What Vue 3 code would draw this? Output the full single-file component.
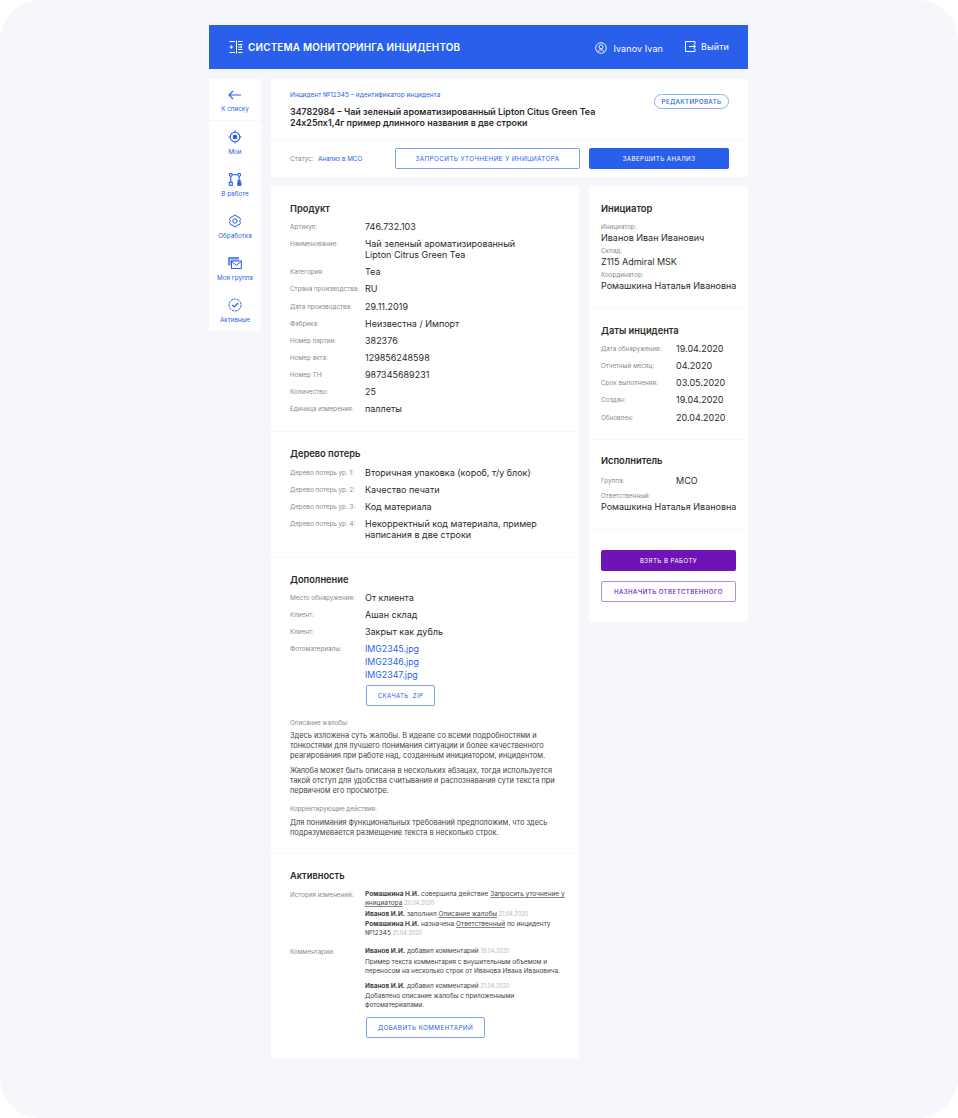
<script setup>
const product = [
  ['Артикул:', ['746.732.103']],
  ['Наименование:', ['Чай зеленый ароматизированный', 'Lipton Citrus Green Tea']],
  ['Категория:', ['Tea']],
  ['Страна производства:', ['RU']],
  ['Дата производства:', ['29.11.2019']],
  ['Фабрика:', ['Неизвестна / Импорт']],
  ['Номер партии:', ['382376']],
  ['Номер акта:', ['129856248598']],
  ['Номер ТН:', ['987345689231']],
  ['Количество:', ['25']],
  ['Единица измерения:', ['паллеты']]
]

const lossTree = [
  ['Дерево потерь ур. 1:', ['Вторичная упаковка (короб, т/у блок)']],
  ['Дерево потерь ур. 2:', ['Качество печати']],
  ['Дерево потерь ур. 3:', ['Код материала']],
  ['Дерево потерь ур. 4:', ['Некорректный код материала, пример', 'написания в две строки']]
]

const extra = [
  ['Место обнаружения:', ['От клиента']],
  ['Клиент:', ['Ашан склад']],
  ['Клиент:', ['Закрыт как дубль']]
]

const photos = ['IMG2345.jpg', 'IMG2346.jpg', 'IMG2347.jpg']

const dates = [
  ['Дата обнаружения:', '19.04.2020'],
  ['Отчетный месяц:', '04.2020'],
  ['Срок выполнения:', '03.05.2020'],
  ['Создан:', '19.04.2020'],
  ['Обновлен:', '20.04.2020']
]

const initiator = [
  ['Инициатор:', 'Иванов Иван Иванович'],
  ['Склад:', 'Z115 Admiral MSK'],
  ['Координатор:', 'Ромашкина Наталья Ивановна']
]
</script>

<template>
  <div class="page">
    <header class="topbar">
      <div class="brand">
        <svg class="brand-icon" viewBox="0 0 14 14" fill="none" stroke="#fff" stroke-width="1">
          <path d="M0.5 1.5h5.500M7.500 .5v13M9 1.500h4.500M0.500 7h3.500M2.250 5.250v3.500M0.500 12.500h5.500M9 4.500h4.500M9 7h4M11.500 5.700l1.500 1.300-1.500 1.300M9 9.500h4.500M9 12.500h4.500" />
        </svg>
        <span>СИСТЕМА МОНИТОРИНГА ИНЦИДЕНТОВ</span>
      </div>
      <div class="user">
        <svg class="user-icon" viewBox="0 0 12 12" fill="none" stroke="#fff" stroke-width="0.9">
          <circle cx="6" cy="6" r="5.300" />
          <circle cx="6" cy="4.800" r="2" />
          <path d="M2.800 9.800c.6-1.400 1.800-2 3.200-2s2.600.6 3.200 2" />
        </svg>
        <span>Ivanov Ivan</span>
      </div>
      <div class="logout">
        <svg class="logout-icon" viewBox="0 0 11 11" fill="none" stroke="#fff" stroke-width="1">
          <path d="M10 7.500v3H.5V.5H10v3M4 5.500h6.500M8.300 3.500l2.200 2-2.200 2" />
        </svg>
        <span>Выйти</span>
      </div>
    </header>

    <div class="body">
      <nav class="side">
        <a class="side-back">
          <svg viewBox="0 0 14 10" width="14" height="10" fill="none" stroke="#2a5fec" stroke-width="1.100">
            <path d="M13 5H1M5 1L1 5l4 4" />
          </svg>
          <span>К списку</span>
        </a>
        <a class="side-item">
          <svg viewBox="0 0 14 14" fill="none" stroke="#2a5fec" stroke-width="1.100">
            <circle cx="7" cy="7" r="4.800" />
            <circle cx="7" cy="7" r="1.800" fill="#2a5fec" />
            <path d="M7 .5v2M7 11.500v2M.5 7h2M11.500 7h2" />
          </svg>
          <span>Мои</span>
        </a>
        <a class="side-item">
          <svg viewBox="0 0 14 14" fill="none" stroke="#2a5fec" stroke-width="1.100">
            <circle cx="2.800" cy="2.800" r="1.400" />
            <circle cx="11.200" cy="2.800" r="1.400" />
            <rect x="1.300" y="10.300" width="3" height="3" />
            <rect x="9.800" y="10.300" width="3" height="3" fill="#2a5fec" />
            <path d="M2.800 4.200v6.100M4.200 2.800h5.600M11.200 4.200v6.100M9.700 8.200l1.500 2 1.500-2" />
          </svg>
          <span>В работе</span>
        </a>
        <a class="side-item">
          <svg viewBox="0 0 14 14" fill="none" stroke="#2a5fec" stroke-width="1">
            <circle cx="7" cy="7" r="2.200" />
            <path d="M9.300 3.020A2.350 2.350 0 0 1 11.600 7A2.350 2.350 0 0 1 9.300 10.980A2.350 2.350 0 0 1 4.700 10.980A2.350 2.350 0 0 1 2.400 7A2.350 2.350 0 0 1 4.700 3.020A2.350 2.350 0 0 1 9.300 3.020Z" />
          </svg>
          <span>Обработка</span>
        </a>
        <a class="side-item">
          <svg viewBox="0 0 14 14" fill="none" stroke="#2a5fec" stroke-width="1">
            <path d="M1 9.500V2h10" stroke-width="1.400" />
            <path d="M3 9.500V4h8" stroke-width="0.800" />
            <rect x="3.500" y="5" width="9.800" height="7.500" fill="#fff" />
            <path d="M3.500 5.500l4.900 3.800 4.900-3.800" />
          </svg>
          <span>Моя группа</span>
        </a>
        <a class="side-item">
          <svg viewBox="0 0 14 14" fill="none" stroke="#2a5fec" stroke-width="1">
            <circle cx="7" cy="7" r="6" stroke-dasharray="2.600 .7" />
            <path d="M4.300 7l2 2 3.700-4" stroke-width="1.200" />
          </svg>
          <span>Активные</span>
        </a>
      </nav>

      <div class="content">
        <section class="head-card">
          <div class="head-top">
            <div class="head-text">
              <div class="incident-id">Инцидент №12345 – идентификатор инцидента</div>
              <h1>34782984 – Чай зеленый ароматизированный Lipton Citus Green Tea<br>24х25пх1,4г пример длинного названия в две строки</h1>
            </div>
            <button class="pill" type="button">РЕДАКТИРОВАТЬ</button>
          </div>
          <div class="head-bottom">
            <span class="status-label">Статус:</span>
            <span class="status-value">Анализ в МСО</span>
            <button class="btn btn-outline btn-request" type="button">ЗАПРОСИТЬ УТОЧНЕНИЕ У ИНИЦИАТОРА</button>
            <button class="btn btn-primary btn-finish" type="button">ЗАВЕРШИТЬ АНАЛИЗ</button>
          </div>
        </section>

        <div class="columns">
          <main class="main-card">
            <section class="block block-product">
              <h2>Продукт</h2>
              <div v-for="row in product" :key="row[0]" class="row">
                <div class="label">{{ row[0] }}</div>
                <div class="value">
                  <div v-for="line in row[1]" :key="line">{{ line }}</div>
                </div>
              </div>
            </section>

            <section class="block block-tree">
              <h2>Дерево потерь</h2>
              <div v-for="row in lossTree" :key="row[0]" class="row">
                <div class="label">{{ row[0] }}</div>
                <div class="value">
                  <div v-for="line in row[1]" :key="line">{{ line }}</div>
                </div>
              </div>
            </section>

            <section class="block block-extra">
              <h2>Дополнение</h2>
              <div v-for="(row, i) in extra" :key="i" class="row">
                <div class="label">{{ row[0] }}</div>
                <div class="value">
                  <div v-for="line in row[1]" :key="line">{{ line }}</div>
                </div>
              </div>
              <div class="row row-photos">
                <div class="label">Фотоматериалы:</div>
                <div class="value">
                  <a v-for="p in photos" :key="p" class="photo">{{ p }}</a>
                  <button class="btn btn-outline btn-zip" type="button">СКАЧАТЬ .ZIP</button>
                </div>
              </div>
              <div class="label text-label">Описание жалобы:</div>
              <p class="text">Здесь изложена суть жалобы. В идеале со всеми подробностями и<br>тонкостями для лучшего понимания ситуации и более качественного<br>реагирования при работе над, созданным инициатором, инцидентом.</p>
              <p class="text text-next">Жалоба может быть описана в нескольких абзацах, тогда используется<br>такой отступ для удобства считывания и распознавания сути текста при<br>первичном его просмотре.</p>
              <div class="label text-label text-label-2">Корректирующие действия:</div>
              <p class="text text-last">Для понимания функциональных требований предположим, что здесь<br>подразумевается размещение текста в несколько строк.</p>
            </section>

            <section class="block block-activity">
              <h2>Активность</h2>
              <div class="activity-row">
                <div class="label">История изменений:</div>
                <div class="activity-body">
                  <p class="log"><b>Ромашкина Н.И.</b> совершила действие <u>Запросить уточнение у<br>инициатора</u> <small>20.04.2020</small></p>
                  <p class="log"><b>Иванов И.И.</b> заполнил <u>Описание жалобы</u> <small>21.04.2020</small></p>
                  <p class="log"><b>Ромашкина Н.И.</b> назначена <u>Ответственный</u> по инциденту<br>№12345 <small>21.04.2020</small></p>
                </div>
              </div>
              <div class="activity-row activity-comments">
                <div class="label">Комментарии:</div>
                <div class="activity-body">
                  <p class="log"><b>Иванов И.И.</b> добавил комментарий <small>19.04.2020</small></p>
                  <p class="comment">Пример текста комментария с внушительным объемом и<br>переносом на несколько строк от Иванова Ивана Ивановича.</p>
                  <p class="log log-next"><b>Иванов И.И.</b> добавил комментарий <small>21.04.2020</small></p>
                  <p class="comment comment-next">Добавлено описание жалобы с приложенными<br>фотоматериалами.</p>
                  <button class="btn btn-outline btn-comment" type="button">ДОБАВИТЬ КОММЕНТАРИЙ</button>
                </div>
              </div>
            </section>
          </main>

          <aside class="right-card">
            <section class="rblock rblock-init">
              <h2>Инициатор</h2>
              <div v-for="row in initiator" :key="row[0]" class="stack">
                <div class="label">{{ row[0] }}</div>
                <div class="value">{{ row[1] }}</div>
              </div>
            </section>
            <section class="rblock rblock-dates">
              <h2>Даты инцидента</h2>
              <div v-for="row in dates" :key="row[0]" class="row row-right">
                <div class="label">{{ row[0] }}</div>
                <div class="value">{{ row[1] }}</div>
              </div>
            </section>
            <section class="rblock rblock-exec">
              <h2>Исполнитель</h2>
              <div class="row row-right">
                <div class="label">Группа:</div>
                <div class="value">МСО</div>
              </div>
              <div class="stack stack-exec">
                <div class="label">Ответственный:</div>
                <div class="value">Ромашкина Наталья Ивановна</div>
              </div>
            </section>
            <section class="actions">
              <button class="btn btn-purple" type="button">ВЗЯТЬ В РАБОТУ</button>
              <button class="btn btn-purple-outline" type="button">НАЗНАЧИТЬ ОТВЕТСТВЕННОГО</button>
            </section>
          </aside>
        </div>
      </div>
    </div>
  </div>
</template>

<style scoped>
.page {
  width: 958px;
  height: 1118px;
  box-sizing: border-box;
  padding: 25px 210px 0 209px;
  background: #f5f7fc;
  border-radius: 40px;
  font-family: Inter, "Noto Sans", sans-serif;
  color: #2b2b2b;
  overflow: hidden;
}

.topbar {
  height: 44px;
  background: #2a5fec;
  color: #fff;
  display: flex;
  align-items: center;
  padding: 0 19px 0 20px;
}

.brand {
  display: flex;
  align-items: center;
  gap: 5px;
  flex: 1;
  font-size: 9.900px;
  font-weight: 600;
  letter-spacing: 0.2px;
}

.brand-icon {
  width: 14px;
  height: 14px;
}

.user {
  display: flex;
  align-items: center;
  gap: 6px;
  font-size: 9px;
  margin-right: 22px;
  letter-spacing: 0.1px;
  padding-top: 2px;
}

.user-icon {
  width: 12px;
  height: 12px;
}

.logout {
  display: flex;
  align-items: center;
  gap: 5px;
  font-size: 9px;
  letter-spacing: 0.1px;
  margin-bottom: 2px;
}

.logout-icon {
  width: 11px;
  height: 11px;
}

.body {
  display: flex;
  gap: 10px;
  margin-top: 10px;
}

.side {
  width: 52px;
  height: 252px;
  background: #fff;
  display: flex;
  flex-direction: column;
  align-items: center;
  flex: none;
}

.side a {
  display: flex;
  flex-direction: column;
  align-items: center;
  color: #2a5fec;
  font-size: 6.300px;
  width: 100%;
}

.side-back {
  height: 42px;
  padding-top: 11px;
  box-sizing: border-box;
  gap: 5px;
  border-bottom: 1px solid #f5f7fc;
}

.side-item {
  height: 42px;
  padding-top: 9px;
  box-sizing: border-box;
  gap: 4px;
}

.side-item svg {
  width: 14px;
  height: 14px;
}

.content {
  width: 477px;
}

.head-card {
  background: #fff;
  height: 98px;
}

.head-top {
  height: 61px;
  box-sizing: border-box;
  border-bottom: 1px solid #f5f7fc;
  padding: 12px 19px 0;
  position: relative;
}

.incident-id {
  font-size: 6.500px;
  color: #2a5fec;
  line-height: 9px;
}

h1 {
  margin: 6px 0 0;
  font-size: 8.900px;
  line-height: 11px;
  font-weight: 600;
  color: #2b2b2b;
  white-space: nowrap;
}

.pill {
  position: absolute;
  top: 15px;
  right: 19px;
  width: 75px;
  height: 15px;
  border: 1px solid #8fadf5;
  border-radius: 8px;
  background: #fff;
  color: #2a5fec;
  font: 500 6.300px Inter, sans-serif;
  letter-spacing: 0.3px;
  padding: 0;
}

.head-bottom {
  height: 37px;
  display: flex;
  align-items: center;
  padding: 0 19px;
  font-size: 6.500px;
}

.status-label {
  color: #8a8a8a;
  margin-right: 4px;
  width: 24px;
  flex: none;
}

.status-value {
  color: #2a5fec;
  width: 77px;
  flex: none;
  font-size: 6.300px;
}

.btn {
  box-sizing: border-box;
  border-radius: 2px;
  font-family: Inter, sans-serif;
  font-weight: 400;
  letter-spacing: 0.4px;
  padding: 0;
  display: block;
}

.btn-outline {
  background: #fff;
  border: 1px solid #7f9ff2;
  color: #2a5fec;
}

.btn-primary {
  background: #2a5fec;
  border: none;
  color: #fff;
}

.btn-request {
  width: 185px;
  height: 21px;
  font-size: 6.300px;
}

.btn-finish {
  width: 140px;
  height: 21px;
  margin-left: 9px;
  font-size: 6.200px;
}

.columns {
  display: flex;
  gap: 10px;
  margin-top: 9px;
  align-items: flex-start;
}

.main-card {
  width: 308px;
  height: 872px;
  background: #fff;
  flex: none;
}

.right-card {
  width: 159px;
  height: 436px;
  background: #fff;
  flex: none;
}

h2 {
  margin: 0;
  font-size: 9.300px;
  line-height: 12px;
  font-weight: 600;
  color: #2b2b2b;
}

.block {
  box-sizing: border-box;
  padding: 16px 19px 0;
  border-bottom: 1px solid #f5f7fc;
}

.block-product {
  height: 246px;
  padding-top: 17px;
}

.block-product h2 {
  margin-bottom: 6px;
}

.block-tree {
  height: 126px;
}

.block-tree h2 {
  margin-bottom: 7px;
}

.block-extra {
  height: 296px;
}

.block-extra h2 {
  margin-bottom: 6px;
}

.block-activity {
  border-bottom: none;
}

.block-activity h2 {
  margin-bottom: 8px;
}

.row {
  display: flex;
  margin-bottom: 6.150px;
}

.label {
  font-size: 6.300px;
  line-height: 11px;
  color: #8a8a8a;
  white-space: nowrap;
}

.row > .label {
  width: 75px;
  flex: none;
  line-height: 9px;
  padding-top: 2px;
}

.value {
  font-size: 9px;
  line-height: 11px;
  color: #2b2b2b;
  white-space: nowrap;
}

.row-photos {
  margin-bottom: 0;
}

.row-photos > .value {
  margin-top: -1px;
}

.photo {
  display: block;
  font-size: 8.800px;
  line-height: 13px;
  color: #2a5fec;
}

.btn-zip {
  width: 69px;
  height: 21px;
  margin: 4px 0 0 1px;
  font-size: 6px;
}

.text-label {
  margin-top: 12px;
}

.text-label-2 {
  margin-top: 8px;
}

.text {
  margin: 2px 0 0;
  font-size: 7.400px;
  line-height: 10px;
  color: #444;
  white-space: nowrap;
}

.text-next {
  margin-top: 5px;
}

.text-last {
  margin-top: 3px;
}

.activity-row {
  display: flex;
}

.activity-row > .label {
  width: 75px;
  flex: none;
}

.activity-body {
  width: 200px;
}

.activity-comments {
  margin-top: 7px;
}

.log {
  margin: 0 0 1.500px;
  font-size: 6.500px;
  line-height: 9px;
  color: #444;
  white-space: nowrap;
}

.log b {
  font-weight: 700;
}

.log small {
  font-size: 5.500px;
  color: #b5b5b5;
}

.log u {
  text-decoration-color: #888;
  text-underline-offset: 1px;
}

.log-next {
  margin-top: 6.250px;
}

.comment {
  margin: 2.750px 0 0;
  font-size: 6.400px;
  line-height: 8.500px;
  color: #444;
  white-space: nowrap;
}

.comment-next {
  margin-top: 1.500px;
}

.btn-comment {
  width: 119px;
  height: 21px;
  margin: 8px 0 0 1px;
  font-size: 6.300px;
}

.rblock {
  box-sizing: border-box;
  padding: 16px 12px 0;
  border-bottom: 1px solid #f5f7fc;
}

.rblock-init {
  height: 123px;
  padding-top: 17px;
}

.rblock-init h2 {
  margin-bottom: 8px;
}

.rblock-dates {
  height: 131px;
}

.rblock-dates h2 {
  margin-bottom: 6px;
}

.rblock-exec {
  height: 90px;
  padding-top: 15px;
}

.rblock-exec h2 {
  margin-bottom: 8px;
}

.row-right > .label {
  width: 75px;
}

.stack {
  margin-bottom: 3px;
}

.stack .label {
  line-height: 8px;
}

.stack .value {
  line-height: 13px;
}

.stack-exec {
  margin-top: 5px;
}

.actions {
  padding: 20px 12px 0;
}

.actions .btn {
  width: 135px;
  height: 21px;
  font-size: 6.200px;
}

.btn-purple {
  background: #6e13b5;
  border: none;
  color: #fff;
}

.btn-purple-outline {
  margin-top: 10px;
  background: #fff;
  border: 1px solid #b98ae0;
  color: #6e13b5;
  font-weight: 500;
}
</style>

<style>
html, body {
  background: #fff;
}
</style>
